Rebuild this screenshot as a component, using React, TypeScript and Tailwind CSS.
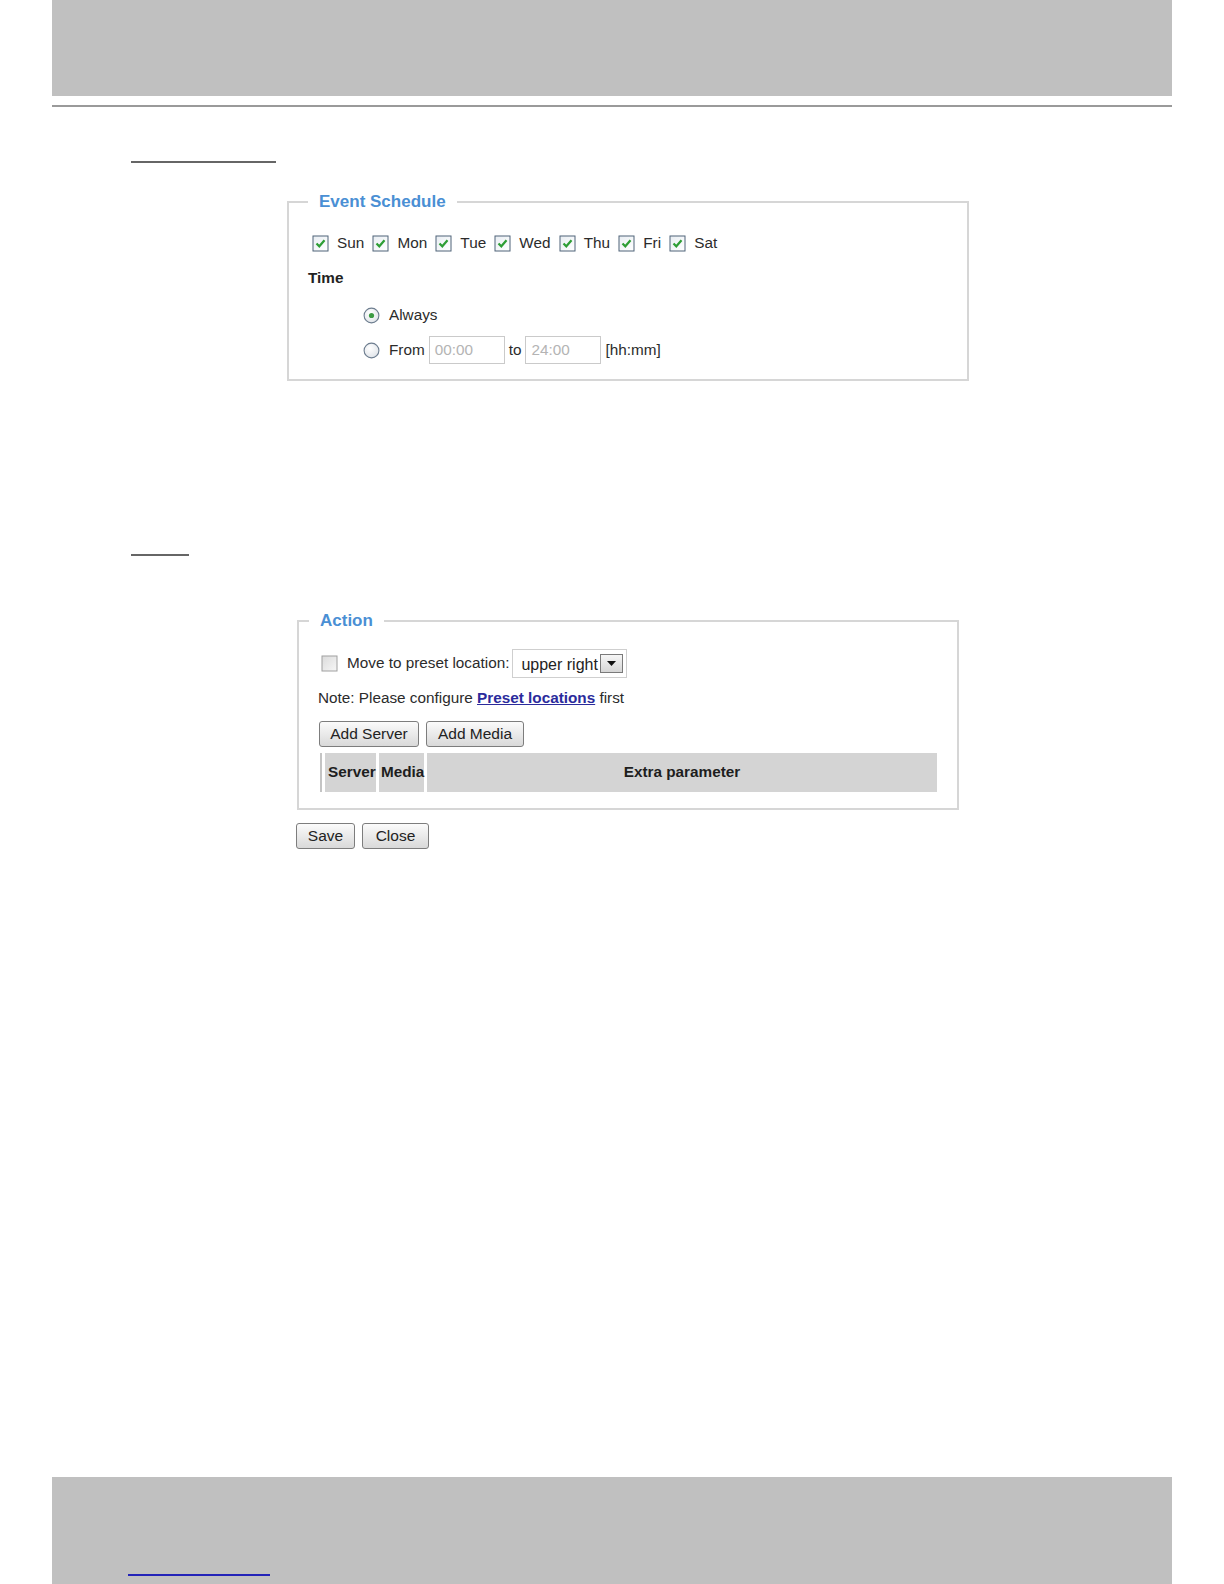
import React from 'react';

const font = { fontFamily: '"Liberation Sans", Arial, sans-serif' };

const CheckBox: React.FC<{ checked?: boolean }> = ({ checked }) => (
  <svg width="17" height="17" viewBox="0 0 17 17" className="shrink-0">
    <defs>
      <linearGradient id={checked ? 'cbOn' : 'cbOff'} x1="0" y1="0" x2="1" y2="1">
        <stop offset="0" stopColor={checked ? '#e9eef3' : '#dcdcdc'} />
        <stop offset="1" stopColor={checked ? '#ffffff' : '#f6f6f6'} />
      </linearGradient>
    </defs>
    <rect x="0.5" y="0.5" width="16" height="16" fill={checked ? '#4f6378' : '#a0a0a0'} />
    <rect x="1.5" y="1.5" width="14" height="14" fill={`url(#${checked ? 'cbOn' : 'cbOff'})`} />
    {checked && <path d="M4.5 8.5 L7.3 11.3 L12.5 5.3" stroke="#2e9e35" strokeWidth="2.2" fill="none" />}
  </svg>
);

const Radio: React.FC<{ checked?: boolean }> = ({ checked }) => (
  <svg width="17" height="17" viewBox="0 0 17 17" className="shrink-0">
    <defs>
      <radialGradient id="rdFill" cx="0.4" cy="0.35" r="0.7">
        <stop offset="0" stopColor="#ffffff" />
        <stop offset="1" stopColor="#dfe3e8" />
      </radialGradient>
    </defs>
    <circle cx="8.5" cy="8.5" r="7.4" fill="url(#rdFill)" stroke="#6d7d8f" strokeWidth="1.1" />
    {checked && <circle cx="8.5" cy="8.5" r="2.6" fill="#3c9a42" />}
  </svg>
);

const Button: React.FC<{ label: string; w: string }> = ({ label, w }) => (
  <button
    className={`${w} h-[26px] border border-[#7d7d7d] rounded-[3px] bg-gradient-to-b from-[#fbfbfb] to-[#d9d9d9] text-[15.5px] text-[#222] leading-none`}
    style={font}
  >
    {label}
  </button>
);

const Day: React.FC<{ label: string }> = ({ label }) => (
  <span className="flex items-center mr-[8.2px]">
    <CheckBox checked />
    <span className="ml-[8px]">{label}</span>
  </span>
);

const App: React.FC = () => {
  const days = ['Sun', 'Mon', 'Tue', 'Wed', 'Thu', 'Fri', 'Sat'];

  return (
    <div className="w-[1224px] min-h-[1584px] bg-white flex flex-col text-[#2b2b2b]" style={font}>
      <div className="mx-[52px] flex flex-col flex-1">
        {/* header */}
        <div className="h-[96px] bg-[#c0c0c0]" />
        <div className="mt-[9px] h-[2px] bg-[#9a9a9a]" />

        <div className="mt-[54px] ml-[79px] w-[145px] h-[2px] bg-[#666]" />

        {/* event schedule */}
        <fieldset className="mt-[29px] ml-[235px] w-[682px] border-2 border-[#d6d6d6]">
          <legend className="ml-[19px] px-[11px] text-[17px] leading-[20px] font-bold text-[#4a8fd4]">
            Event Schedule
          </legend>
          <div className="pt-[22px] pb-[15px] text-[15.3px]">
            <div className="h-[18px] pl-[23px] flex items-center">
              {days.map((d) => (
                <Day key={d} label={d} />
              ))}
            </div>
            <div className="mt-[16px] h-[20px] pl-[19px] flex items-center font-bold text-[#222]">Time</div>
            <div className="mt-[17px] h-[20px] pl-[74px] flex items-center">
              <Radio checked />
              <span className="ml-[9px]">Always</span>
            </div>
            <div className="mt-[11px] h-[28px] pl-[74px] flex items-center">
              <Radio />
              <span className="ml-[9px]">From</span>
              <div className="ml-[4px] w-[76px] h-[28px] border border-[#cacaca] flex items-center pl-[5px] text-[#b4b4b4]">
                00:00
              </div>
              <span className="ml-[4px]">to</span>
              <div className="ml-[4px] w-[76px] h-[28px] border border-[#cacaca] flex items-center pl-[5px] text-[#b4b4b4]">
                24:00
              </div>
              <span className="ml-[4px]">[hh:mm]</span>
            </div>
          </div>
        </fieldset>

        <div className="mt-[173px] ml-[79px] w-[58px] h-[2px] bg-[#666]" />

        {/* action */}
        <fieldset className="mt-[55px] ml-[245px] w-[662px] border-2 border-[#d6d6d6]">
          <legend className="ml-[10px] px-[11px] text-[17px] leading-[20px] font-bold text-[#4a8fd4]">
            Action
          </legend>
          <div className="pt-[18px] pb-[16px] text-[15.3px]">
            <div className="h-[29px] pl-[22px] flex items-center">
              <CheckBox />
              <span className="ml-[9px]">Move to preset location:</span>
              <div className="ml-[3px] w-[115px] h-[29px] border border-[#cfcfcf] flex items-center justify-between pl-[8px] pr-[3px]">
                <span className="text-[16px] text-[#222] pt-[3px]">upper right</span>
                <span className="w-[23px] h-[19px] border border-[#7a7a7a] bg-gradient-to-b from-[#f6f6f6] to-[#d6d6d6] flex items-center justify-center">
                  <svg width="9" height="5" viewBox="0 0 9 5">
                    <path d="M0 0 H9 L4.5 5 Z" fill="#111" />
                  </svg>
                </span>
              </div>
            </div>
            <div className="mt-[10px] h-[20px] pl-[19px] flex items-center">
              <span>Note: Please configure&nbsp;</span>
              <a href="#" className="font-bold underline text-[#2b2b9c]">Preset locations</a>
              <span>&nbsp;first</span>
            </div>
            <div className="mt-[13px] pl-[20px] flex gap-[7px]">
              <Button label="Add Server" w="w-[100px]" />
              <Button label="Add Media" w="w-[98px]" />
            </div>
            <div className="mt-[6px] ml-[21px] h-[39px] w-[617px] flex font-bold text-[#1e1e1e]">
              <div className="w-[2px] bg-[#c4c4c4]" />
              <div className="ml-[3px] w-[51px] bg-[#d4d4d4] flex items-center pl-[3px]">Server</div>
              <div className="ml-[3px] w-[45px] bg-[#d4d4d4] flex items-center pl-[2px]">Media</div>
              <div className="ml-[3px] flex-1 bg-[#d4d4d4] flex items-center justify-center">Extra parameter</div>
            </div>
          </div>
        </fieldset>

        <div className="mt-[13px] ml-[244px] flex gap-[7px]">
          <Button label="Save" w="w-[59px]" />
          <Button label="Close" w="w-[67px]" />
        </div>

        {/* footer */}
        <div className="mt-auto h-[107px] bg-[#c0c0c0] pt-[97px]">
          <div className="ml-[76px] w-[142px] h-[2px] bg-[#2323b8]" />
        </div>
      </div>
    </div>
  );
};

export default App;
